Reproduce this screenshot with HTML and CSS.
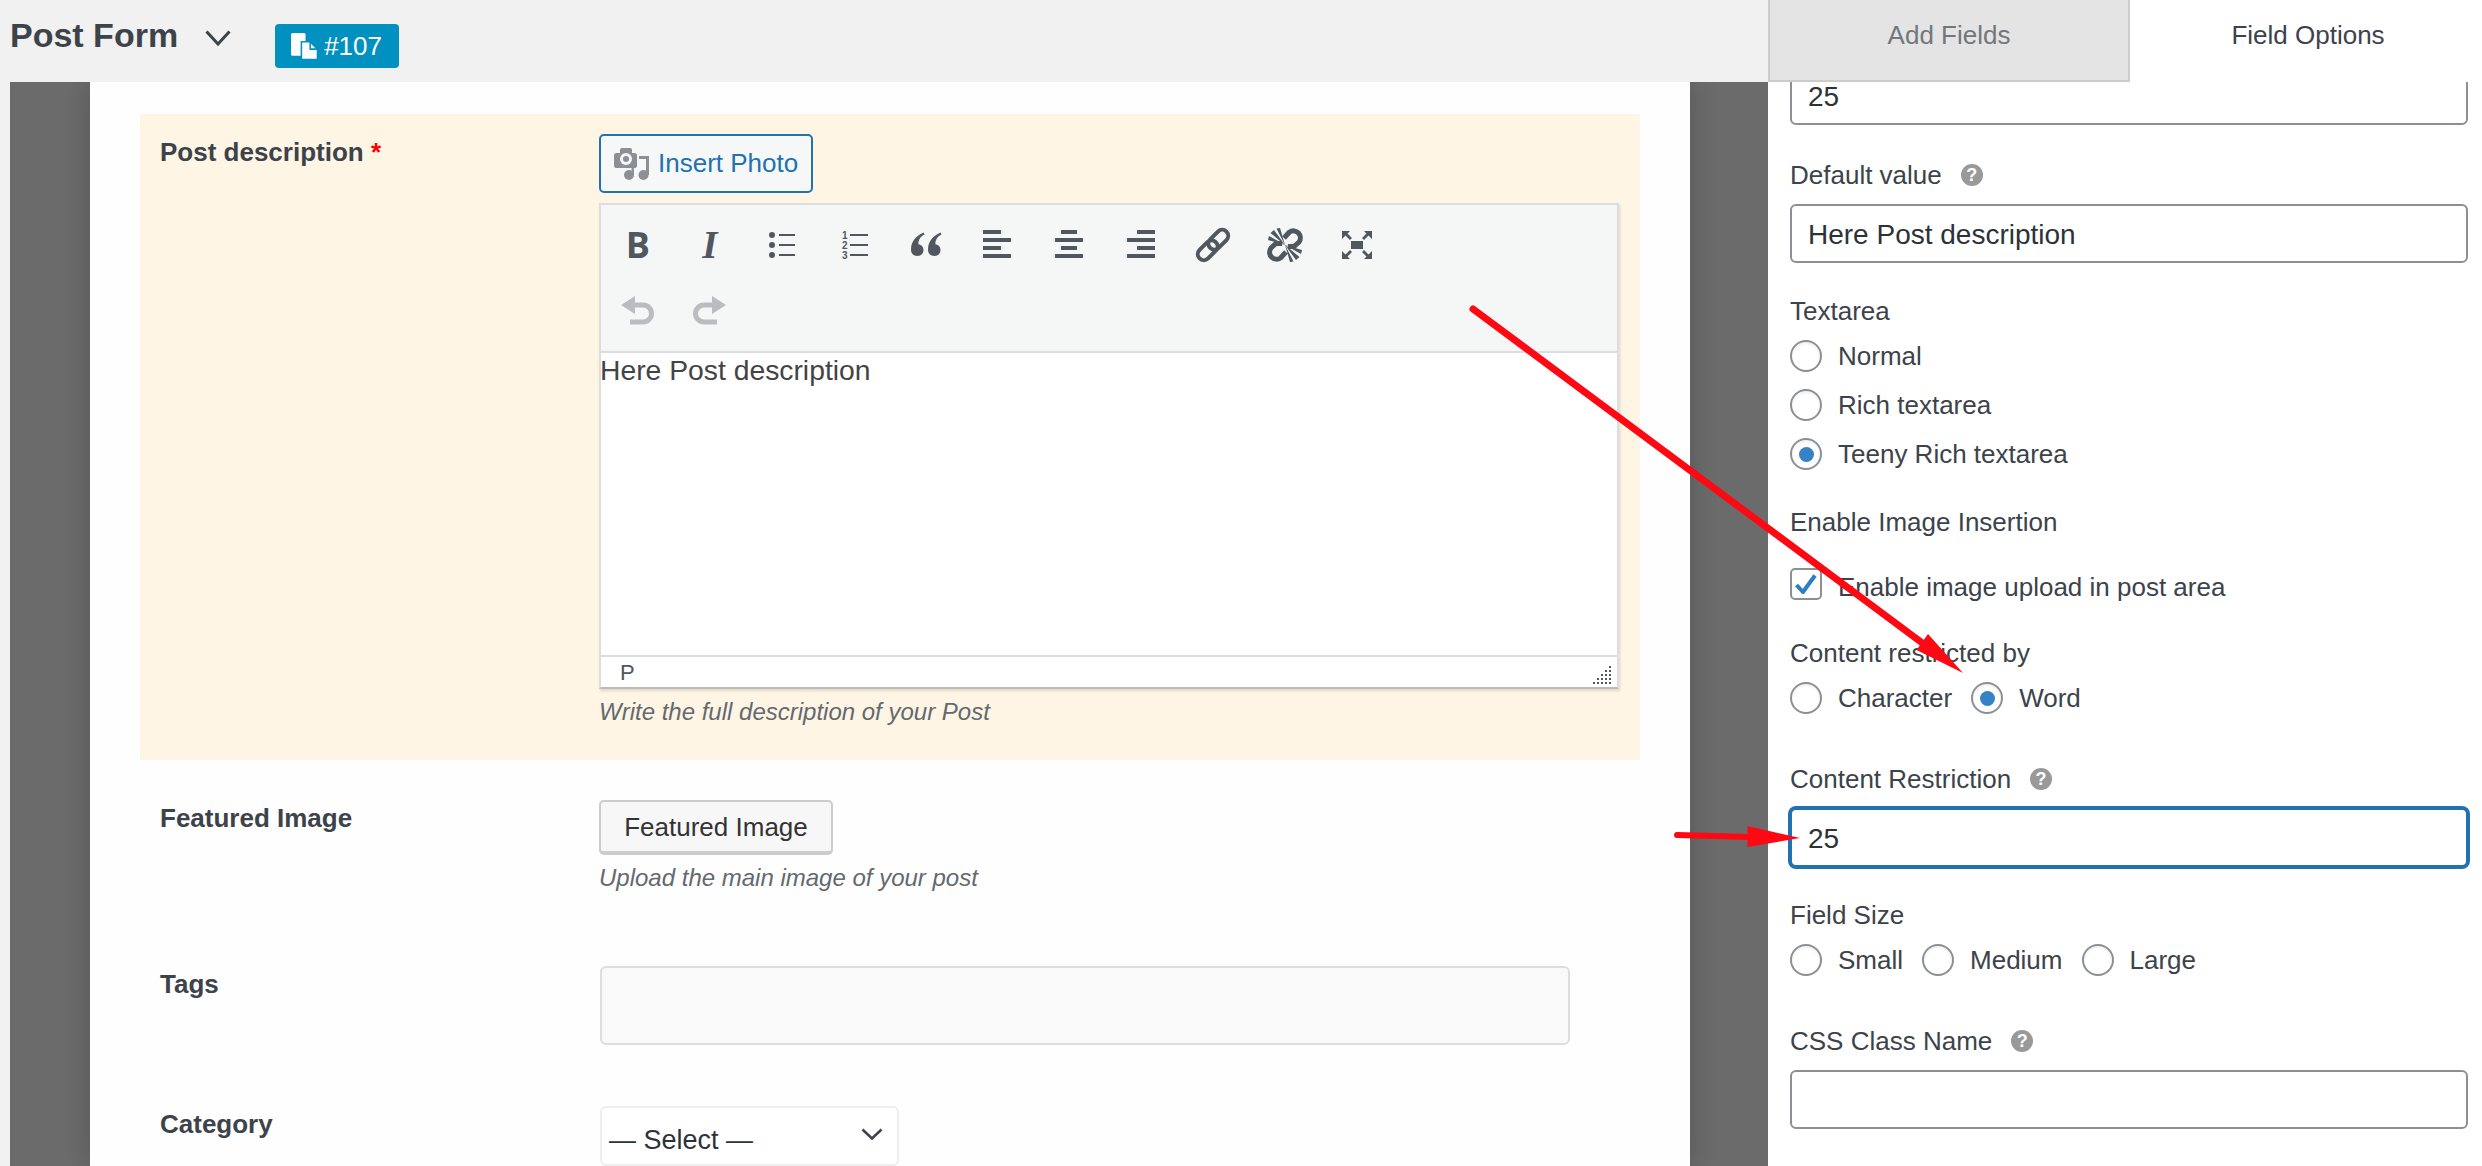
FILE: index.html
```html
<!DOCTYPE html>
<html lang="en">
<head>
<meta charset="utf-8">
<title>Post Form</title>
<link rel="stylesheet" href="styles.css">
</head>
<body>
<div class="app">
  <div class="builder">
    <header class="topbar">
      <h1 class="title">Post Form</h1>
      <svg class="title-chevron" viewBox="0 0 26 16"><path d="M1.5 1.5 13 14 24.5 1.5"/></svg>
      <div class="badge">
        <svg class="badge-icon" viewBox="0 0 26 26"><path class="doc-back" d="M1.5 0h11A1.5 1.5 0 0 1 14 1.500V22H1.500A1.500 1.500 0 0 1 0 20.500V1.500A1.500 1.500 0 0 1 1.500 0z"/><path class="doc-front" d="M10 8.500h8.500l7 7V25.500H10z"/><path class="doc-fold" d="M18.500 8.500v7h7"/></svg>
        <span>#107</span>
      </div>
    </header>
    <div class="canvas">
      <main class="sheet">
        <section class="row row-active">
          <div class="row-label">Post description <span class="req">*</span></div>
          <div class="row-field">
            <button class="insert-btn" type="button">
              <svg class="media-icon" viewBox="0 0 35 32"><rect x="0" y="5" width="23" height="15" rx="2.500"/><rect x="6" y="0" width="12" height="7" rx="1.500"/><circle class="lens" cx="12" cy="11" r="6"/><circle cx="12" cy="11" r="3"/><circle cx="15" cy="27" r="5"/><circle cx="29.500" cy="27" r="5"/><rect x="17.500" y="17" width="2.500" height="10"/><rect x="32" y="8" width="3" height="19"/><rect x="25" y="8" width="10" height="3"/></svg>
              <span class="insert-text">Insert Photo</span>
            </button>
            <div class="editor">
              <div class="toolbar">
                <div class="tool-row">
                  <div class="tool"><span class="tool-b">B</span></div>
                  <div class="tool"><span class="tool-i">I</span></div>
                  <div class="tool"><svg class="ico" viewBox="0 0 32 32"><circle cx="6" cy="6" r="3"/><circle cx="6" cy="16" r="3"/><circle cx="6" cy="26" r="3"/><rect x="13" y="5" width="16" height="2"/><rect x="13" y="15" width="16" height="2"/><rect x="13" y="25" width="16" height="2"/></svg></div>
                  <div class="tool"><svg class="ico" viewBox="0 0 32 32"><text class="ol-num" x="4" y="9.500">1</text><text class="ol-num" x="4" y="19.500">2</text><text class="ol-num" x="4" y="29.500">3</text><rect x="12" y="5" width="18" height="2"/><rect x="12" y="15" width="18" height="2"/><rect x="12" y="25" width="18" height="2"/></svg></div>
                  <div class="tool"><svg class="ico" viewBox="0 0 32 32"><path d="M13.500 3.500C7 6.500 1 11.500 1 20.500 1 24.500 3.500 27 7.500 27 11 27 13.500 24.500 13.500 21 13.500 18 11.500 15.500 8.500 15.500 8 11 10.500 7.500 14.500 5.500z"/><path d="M30.500 3.500C24 6.500 18 11.500 18 20.500 18 24.500 20.500 27 24.500 27 28 27 30.500 24.500 30.500 21 30.500 18 28.500 15.500 25.500 15.500 25 11 27.500 7.500 31.500 5.500z"/></svg></div>
                  <div class="tool"><svg class="ico" viewBox="0 0 32 32"><rect x="2" y="1" width="18" height="4"/><rect x="2" y="9" width="28" height="4"/><rect x="2" y="17" width="18" height="4"/><rect x="2" y="25" width="28" height="4"/></svg></div>
                  <div class="tool"><svg class="ico" viewBox="0 0 32 32"><rect x="8" y="1" width="16" height="4"/><rect x="2" y="9" width="28" height="4"/><rect x="8" y="17" width="16" height="4"/><rect x="2" y="25" width="28" height="4"/></svg></div>
                  <div class="tool"><svg class="ico" viewBox="0 0 32 32"><rect x="12" y="1" width="18" height="4"/><rect x="2" y="9" width="28" height="4"/><rect x="12" y="17" width="18" height="4"/><rect x="2" y="25" width="28" height="4"/></svg></div>
                  <div class="tool"><svg class="ico ico-36" viewBox="0 0 36 36"><g class="link-lines" transform="rotate(-45 18 18)"><rect x="-1" y="12" width="23" height="12" rx="6"/><rect x="14" y="12" width="23" height="12" rx="6"/></g></svg></div>
                  <div class="tool"><svg class="ico ico-36" viewBox="0 0 36 36"><path class="unlink-arc" d="M17 11 22.500 5A7 7 0 0 1 32 15L27 19.500H21"/><path class="unlink-arc" d="M19 25 13.500 31A7 7 0 0 1 4 21L9 16.500H15"/><path d="M18 18 1 13 2 9zM18 18 3.500 6 7 3zM18 18 9.500 1.500 13 1zM18 18 35 23 34 27zM18 18 32.500 30 29 33zM18 18 26.500 34.500 23 35z"/></svg></div>
                  <div class="tool"><svg class="ico" viewBox="0 0 32 30"><rect x="10" y="11" width="12" height="8"/><path d="M1 1H9L6.500 3.500 11 8 9 10 4.500 5.500 1 9zM31 1H23L25.500 3.500 21 8 23 10 27.500 5.500 31 9zM1 29H9L6.500 26.500 11 22 9 20 4.500 24.500 1 21zM31 29H23L25.500 26.500 21 22 23 20 27.500 24.500 31 21z"/></svg></div>
                </div>
                <div class="tool-row">
                  <div class="tool tool-off"><svg class="ico ico-hist" viewBox="0 0 33 30"><path d="M0 9 14 0V18z"/><path class="hist-line" d="M13 9H22A8.500 8.500 0 0 1 22 26H9"/></svg></div>
                  <div class="tool tool-off"><svg class="ico ico-hist flip" viewBox="0 0 33 30"><path d="M0 9 14 0V18z"/><path class="hist-line" d="M13 9H22A8.500 8.500 0 0 1 22 26H9"/></svg></div>
                </div>
              </div>
              <div class="editor-body">Here Post description</div>
              <div class="statusbar">
                <span>P</span>
                <svg class="grip" viewBox="0 0 18 18"><rect x="16" y="0" width="2" height="2"/><rect x="12" y="4" width="2" height="2"/><rect x="16" y="4" width="2" height="2"/><rect x="8" y="8" width="2" height="2"/><rect x="12" y="8" width="2" height="2"/><rect x="16" y="8" width="2" height="2"/><rect x="4" y="12" width="2" height="2"/><rect x="8" y="12" width="2" height="2"/><rect x="12" y="12" width="2" height="2"/><rect x="16" y="12" width="2" height="2"/><rect x="0" y="16" width="2" height="2"/><rect x="4" y="16" width="2" height="2"/><rect x="8" y="16" width="2" height="2"/><rect x="12" y="16" width="2" height="2"/><rect x="16" y="16" width="2" height="2"/></svg>
              </div>
            </div>
            <p class="help">Write the full description of your Post</p>
          </div>
        </section>
        <section class="row row-featured">
          <div class="row-label">Featured Image</div>
          <div class="row-field">
            <button class="plain-btn" type="button">Featured Image</button>
            <p class="help help-tight">Upload the main image of your post</p>
          </div>
        </section>
        <section class="row row-tags">
          <div class="row-label">Tags</div>
          <div class="row-field"><div class="tags-box"></div></div>
        </section>
        <section class="row row-category">
          <div class="row-label">Category</div>
          <div class="row-field">
            <div class="select-box">
              <span>— Select —</span>
              <svg class="select-chevron" viewBox="0 0 22 12"><path d="M1.500 1.500 11 10.500 20.500 1.500"/></svg>
            </div>
          </div>
        </section>
      </main>
    </div>
  </div>
  <aside class="sidebar">
    <nav class="tabs">
      <div class="tab tab-add">Add Fields</div>
      <div class="tab tab-options">Field Options</div>
    </nav>
    <div class="options">
      <input class="text-input input-cut" type="text" value="25">

      <label class="opt-label gap-35">Default value <span class="q">?</span></label>
      <input class="text-input" type="text" value="Here Post description">

      <label class="opt-label gap-33">Textarea</label>
      <div class="radio-stack">
        <label class="choice"><input type="radio" name="ta">Normal</label>
        <label class="choice"><input type="radio" name="ta">Rich textarea</label>
        <label class="choice"><input type="radio" name="ta" checked>Teeny Rich textarea</label>
      </div>

      <label class="opt-label gap-37">Enable Image Insertion</label>
      <div class="check-row">
        <span class="check"><svg viewBox="0 0 22 20"><path d="M1.500 11 8 18 20 1.500"/></svg></span>
        <span class="check-text">Enable image upload in post area</span>
      </div>

      <label class="opt-label gap-38">Content restricted by</label>
      <div class="radio-line">
        <label class="choice"><input type="radio" name="cr">Character</label>
        <label class="choice"><input type="radio" name="cr" checked>Word</label>
      </div>

      <label class="opt-label gap-50">Content Restriction <span class="q">?</span></label>
      <input class="text-input is-focus" type="text" value="25">

      <label class="opt-label gap-33">Field Size</label>
      <div class="radio-line">
        <label class="choice"><input type="radio" name="fs">Small</label>
        <label class="choice"><input type="radio" name="fs">Medium</label>
        <label class="choice"><input type="radio" name="fs">Large</label>
      </div>

      <label class="opt-label gap-50">CSS Class Name <span class="q">?</span></label>
      <input class="text-input" type="text" value="">
    </div>
  </aside>
  <svg class="arrows" viewBox="0 0 2482 1166">
    <line class="arrow-line" x1="1473" y1="309" x2="1925" y2="645"/>
    <polygon class="arrow-head" points="1963,673 1928,634 1916.500,650"/>
    <line class="arrow-line arrow-line-small" x1="1677" y1="835" x2="1750" y2="837"/>
    <polygon class="arrow-head" points="1800,838 1747.500,826 1747.500,847"/>
  </svg>
</div>
</body>
</html>
```
FILE: styles.css
```css
* { box-sizing: border-box; }
html, body { margin: 0; height: 100%; overflow: hidden; }
body {
  font-family: "Liberation Sans", Arial, sans-serif;
  font-size: 26px;
  color: #3c434a;
  background: #f1f1f1;
}
.app {
  position: relative;
  display: flex;
  width: 2482px;
  height: 1166px;
  overflow: hidden;
}

/* Left column */
.builder {
  width: 1770px;
  flex: none;
  display: flex;
  flex-direction: column;
}
.topbar {
  height: 82px;
  flex: none;
  display: flex;
  align-items: flex-start;
  padding-left: 10px;
  background: #f1f1f1;
}
.title {
  margin: 17px 0 0;
  font-size: 34px;
  line-height: 36px;
  font-weight: 700;
  color: #3c434a;
}
.title-chevron {
  width: 26px;
  height: 16px;
  margin: 30px 0 0 27px;
  fill: none;
  stroke: #3c434a;
  stroke-width: 3;
}
.badge {
  width: 124px;
  height: 44px;
  margin: 24px 0 0 44px;
  padding-left: 16px;
  display: flex;
  align-items: center;
  gap: 6px;
  border-radius: 4px;
  background: #0091c1;
  color: #fff;
  font-size: 26px;
}
.badge-icon { width: 27px; height: 27px; }
.doc-back { fill: #fff; }
.doc-front { fill: #fff; stroke: #0091c1; stroke-width: 1.500; }
.doc-fold { fill: none; stroke: #0091c1; stroke-width: 1.500; }

.canvas {
  flex: 1;
  min-height: 0;
  margin-left: 10px;
  padding: 0 80px;
  background: #6b6b6b;
  overflow: hidden;
}
.sheet {
  height: 100%;
  padding: 32px 50px 0;
  background: #fefefe;
  box-shadow: 0 0 26px rgba(0, 0, 0, .2);
}

.row {
  display: grid;
  grid-template-columns: 439px 1020px;
  padding: 0 21px 0 20px;
}
.row-active {
  height: 646px;
  padding-top: 20px;
  background: #fff5e4;
}
.row-featured { margin-top: 40px; }
.row-tags { margin-top: 73px; }
.row-category { margin-top: 61px; }
.row-label {
  padding-top: 3px;
  font-size: 26px;
  line-height: 30px;
  font-weight: 700;
  color: #3c434a;
}
.req { color: #f00; }

.insert-btn {
  height: 59px;
  width: 214px;
  padding: 0 0 0 13px;
  display: flex;
  align-items: center;
  gap: 9px;
  border: 2px solid #2271b1;
  border-radius: 5px;
  background: #f6f7f7;
  color: #2271b1;
  font: 26px/30px "Liberation Sans", Arial, sans-serif;
}
.insert-text { padding-bottom: 2px; }
.media-icon { width: 35px; height: 32px; flex: none; fill: #8c8f94; }
.media-icon .lens { fill: #f6f7f7; }

.editor {
  margin-top: 10px;
  height: 486px;
  display: flex;
  flex-direction: column;
  border: 2px solid #ddd;
  border-bottom-color: #bbb;
  background: #fff;
  box-shadow: 1px 2px 3px rgba(0, 0, 0, .12);
}
.toolbar {
  height: 148px;
  flex: none;
  padding: 7px 0 0 1px;
  border-bottom: 2px solid #ddd;
  background: #f5f7f6;
}
.tool-row { display: flex; }
.tool {
  width: 71.9px;
  height: 66px;
  flex: none;
  display: flex;
  align-items: center;
  justify-content: center;
  color: #50575e;
  fill: #50575e;
}
.tool-b { font: 700 36px/36px "Open Sans", sans-serif; }
.tool-i { font: italic 700 39px/36px "Liberation Serif", serif; }
.ico { width: 32px; height: 32px; overflow: visible; }
.ico-36 { width: 36px; height: 36px; }
.ico-hist { width: 33px; height: 30px; }
.flip { transform: scaleX(-1); }
.ol-num { font: 700 10px "Liberation Sans", sans-serif; }
.link-lines { fill: none; stroke: #50575e; stroke-width: 4; }
.unlink-arc { fill: none; stroke: #50575e; stroke-width: 5; }
.tool-off { fill: #b9bdc0; }
.hist-line { fill: none; stroke: #b9bdc0; stroke-width: 5; }

.editor-body {
  flex: 1;
  text-indent: -1px;
  font-size: 28.3px;
  line-height: 34px;
  color: #444;
}
.statusbar {
  height: 32px;
  flex: none;
  padding: 2px 6px 0 19px;
  display: flex;
  align-items: center;
  justify-content: space-between;
  border-top: 2px solid #ddd;
  font-size: 22px;
  color: #50575e;
}
.grip { width: 18px; height: 18px; margin-top: 4px; fill: #50575e; }

.help {
  margin: 8px 0 0;
  font-size: 24px;
  line-height: 30px;
  font-style: italic;
  color: #646970;
}

.plain-btn {
  height: 55px;
  width: 234px;
  padding: 0;
  border: 2px solid #ccc;
  border-bottom-width: 4px;
  border-radius: 5px;
  background: #f7f7f7;
  color: #333;
  font: 26px/30px "Liberation Sans", Arial, sans-serif;
}
.tags-box {
  width: 970px;
  height: 79px;
  margin-left: 1px;
  border: 2px solid #ddd;
  border-radius: 6px;
  background: #f9f9f9;
}
.select-box {
  width: 299px;
  height: 60px;
  margin-left: 1px;
  padding: 8px 14px 0 7px;
  display: flex;
  align-items: center;
  justify-content: space-between;
  border: 2px solid #eee;
  border-radius: 6px;
  background: #fff;
  font-size: 27px;
  color: #2c3338;
}
.select-chevron {
  width: 22px;
  height: 12px;
  margin-bottom: 12px;
  fill: none;
  stroke: #3c434a;
  stroke-width: 2.500;
}

/* Right column */
.sidebar {
  position: relative;
  z-index: 2;
  flex: 1;
  margin-left: -2px;
  display: flex;
  flex-direction: column;
  background: #fff;
}
.tabs {
  height: 82px;
  flex: none;
  display: flex;
  position: relative;
  z-index: 1;
  background: #fff;
}
.tab {
  padding-top: 20px;
  text-align: center;
  font-size: 26px;
  line-height: 30px;
}
.tab-add {
  width: 362px;
  border: 2px solid #ccc;
  border-top: 0;
  background: #e4e4e4;
  color: #72777c;
}
.tab-options { flex: 1; padding-left: 4px; color: #3c434a; }

.options {
  flex: 1;
  min-height: 0;
  padding: 0 14px 0 22px;
  overflow: hidden;
}
.text-input {
  display: block;
  width: 100%;
  height: 59px;
  padding: 2px 16px 0;
  border: 2px solid #8c8f94;
  border-radius: 6px;
  background: #fff;
  color: #2c3338;
  font: 28px "Liberation Sans", Arial, sans-serif;
  outline: 0;
}
.input-cut { margin-top: -16px; }
.is-focus { border-color: #2271b1; box-shadow: 0 0 0 2px #2271b1; }

.opt-label {
  display: flex;
  align-items: center;
  height: 30px;
  margin-bottom: 14px;
  font-size: 26px;
  line-height: 30px;
  color: #3c434a;
}
.gap-33 { margin-top: 33px; }
.gap-35 { margin-top: 35px; }
.gap-37 { margin-top: 37px; margin-bottom: 31px; }
.gap-38 { margin-top: 38px; }
.gap-50 { margin-top: 50px; }
.q {
  width: 22px;
  height: 22px;
  margin-left: 19px;
  display: inline-flex;
  align-items: center;
  justify-content: center;
  border-radius: 50%;
  background: #999;
  color: #fff;
  font-size: 18px;
  font-weight: 700;
}

.radio-stack { display: flex; flex-direction: column; gap: 17px; }
.radio-line { display: flex; gap: 19px; }
.choice {
  display: flex;
  align-items: center;
  height: 32px;
  font-size: 26px;
  color: #3c434a;
}
.choice input {
  appearance: none;
  -webkit-appearance: none;
  width: 32px;
  height: 32px;
  margin: 0 16px 0 0;
  flex: none;
  display: flex;
  align-items: center;
  justify-content: center;
  border: 2px solid #8c8f94;
  border-radius: 50%;
  background: #fff;
  box-shadow: inset 0 2px 3px rgba(0, 0, 0, .06);
}
.choice input:checked::before {
  content: "";
  width: 15px;
  height: 15px;
  border-radius: 50%;
  background: #3582c4;
}
.check-row { display: flex; align-items: flex-start; height: 32px; }
.check {
  width: 32px;
  height: 32px;
  margin-right: 16px;
  flex: none;
  display: flex;
  align-items: center;
  justify-content: center;
  border: 2px solid #8c8f94;
  border-radius: 5px;
  background: #fff;
}
.check svg {
  width: 22px;
  height: 20px;
  fill: none;
  stroke: #2b7fc4;
  stroke-width: 4;
}
.check-text { padding-top: 4px; line-height: 30px; }

/* Annotation arrows lie over the whole page */
.arrows {
  position: absolute;
  left: 0;
  top: 0;
  z-index: 5;
  width: 2482px;
  height: 1166px;
  pointer-events: none;
}
.arrow-line {
  stroke: #ff0713;
  stroke-width: 7;
  stroke-linecap: round;
}
.arrow-line-small { stroke-width: 6; }
.arrow-head { fill: #ff0713; }
```
